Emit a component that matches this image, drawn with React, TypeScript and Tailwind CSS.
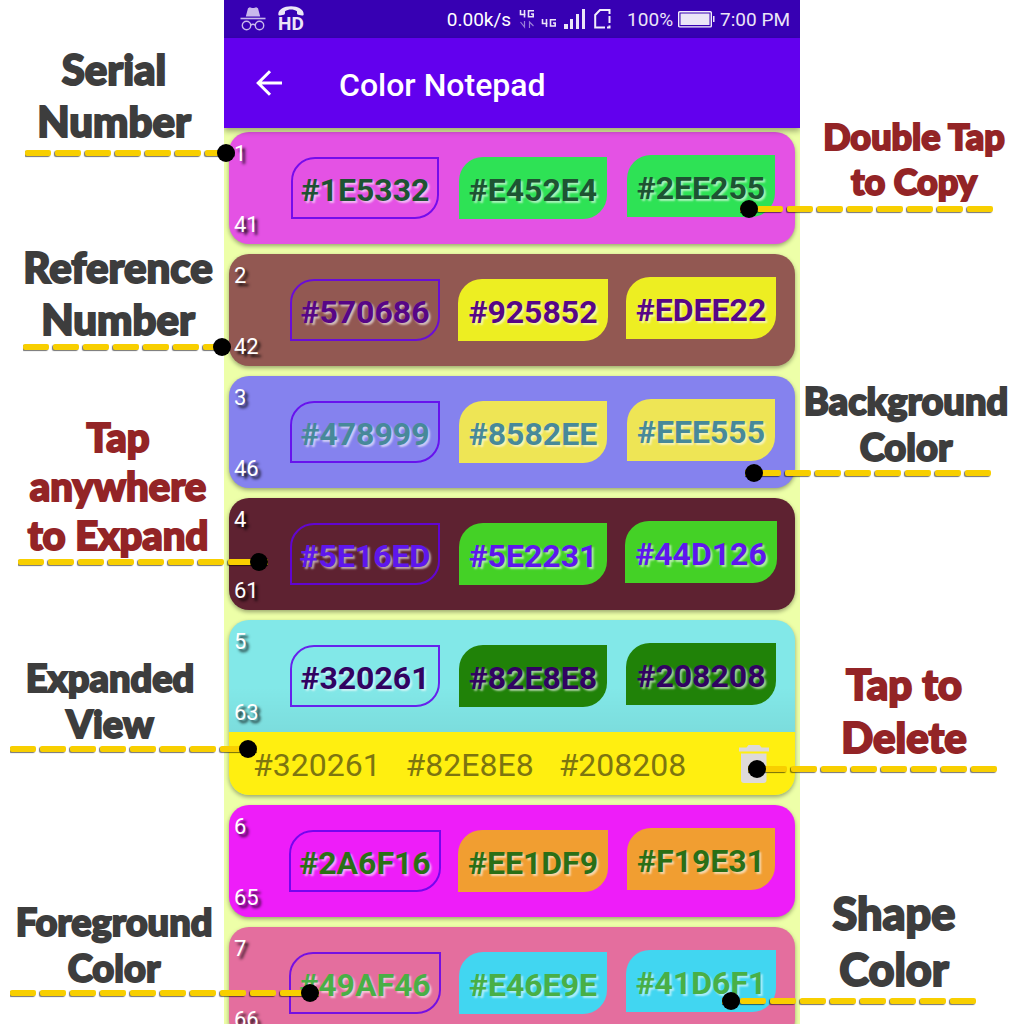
import React from "react";

type Palette = {
  serial: number;
  reference: number;
  background: string;
  shape: string;
  foreground: string;
  colors: [string, string, string];
  expanded?: boolean;
};

const palettes: Palette[] = [
  { serial: 1, reference: 41, background: "bg-[#e452e4]", shape: "bg-[#2ee255]", foreground: "text-[#1e5332]", colors: ["#1E5332", "#E452E4", "#2EE255"] },
  { serial: 2, reference: 42, background: "bg-[#925852]", shape: "bg-[#edee22]", foreground: "text-[#570686]", colors: ["#570686", "#925852", "#EDEE22"] },
  { serial: 3, reference: 46, background: "bg-[#8582ee]", shape: "bg-[#eee555]", foreground: "text-[#478999]", colors: ["#478999", "#8582EE", "#EEE555"] },
  { serial: 4, reference: 61, background: "bg-[#5e2231]", shape: "bg-[#44d126]", foreground: "text-[#5e16ed]", colors: ["#5E16ED", "#5E2231", "#44D126"] },
  { serial: 5, reference: 63, background: "bg-[#82e8e8]", shape: "bg-[#208208]", foreground: "text-[#320261]", colors: ["#320261", "#82E8E8", "#208208"], expanded: true },
  { serial: 6, reference: 65, background: "bg-[#ee1df9]", shape: "bg-[#f19e31]", foreground: "text-[#2a6f16]", colors: ["#2A6F16", "#EE1DF9", "#F19E31"] },
  { serial: 7, reference: 66, background: "bg-[#e46e9e]", shape: "bg-[#41d6f1]", foreground: "text-[#49af46]", colors: ["#49AF46", "#E46E9E", "#41D6F1"] },
];

function IncognitoIcon() {
  return (
    <svg viewBox="0 0 26 26" className="size-[26px]" fill="none" stroke="#c9b8ec" aria-hidden="true">
      <path d="M8 2.2l1.8-1 2.2.8h2l2.2-.8 1.8 1 2.2 8.2H5.800z" fill="#c9b8ec" stroke="none" />
      <path d="M.5 12.500h25" strokeWidth="1.600" />
      <circle cx="6.500" cy="19.500" r="4.200" strokeWidth="1.400" />
      <circle cx="19.500" cy="19.500" r="4.200" strokeWidth="1.400" />
      <path d="M10.700 19.200q2.300-1.800 4.600 0" strokeWidth="1.400" />
    </svg>
  );
}

function HdCallIcon() {
  return (
    <span className="flex flex-col items-center text-[#ebe5f7]">
      <svg viewBox="0 0 26 10" className="h-[10px] w-[26px]" aria-hidden="true">
        <path d="M.3 8.500C0 3.500 6 .3 13 .3S26 3.500 25.700 8.500c-.2 1-.8 1.200-1.700 1l-3.800-.8c-.9-.2-1.200-.8-1.200-1.600V5.300C15.500 3 10.500 3 7 5.300v1.800c0 .8-.3 1.400-1.200 1.600L2 9.500c-.9.2-1.500 0-1.700-1z" fill="currentColor" />
      </svg>
      <span className="text-[19px] leading-[16px] font-bold">HD</span>
    </span>
  );
}

function DataIcon() {
  return (
    <svg viewBox="0 0 16 20" className="h-5 w-4" fill="none" strokeWidth="1.600" aria-hidden="true">
      <path d="M1.500 1v4.500h5M5.500 1v7.500M15 1.800H9.500v6H14.200V5H12" stroke="#ebe5f7" />
      <path d="M1.500 13l4 5v-6M14.500 17l-4-4v6" stroke="#9a7fd8" strokeWidth="1.200" />
    </svg>
  );
}

function SmallFourG() {
  return (
    <svg viewBox="0 0 16 10" className="h-[10px] w-4" fill="none" stroke="#ebe5f7" strokeWidth="1.600" aria-hidden="true">
      <path d="M1.500 1v4.500h5M5.500 1v8M15 1.800H9.500v6.200H14.200V5H12" />
    </svg>
  );
}

function SignalIcon() {
  return (
    <svg viewBox="0 0 22 20" className="h-5 w-[22px]" fill="#ebe5f7" aria-hidden="true">
      <rect x="0" y="15" width="4" height="5" />
      <rect x="6" y="10" width="3" height="10" />
      <rect x="12" y="5" width="3" height="15" />
      <rect x="18" y="0" width="3" height="20" />
    </svg>
  );
}

function SimIcon() {
  return (
    <svg viewBox="0 0 17 20" className="h-5 w-[17px]" fill="none" stroke="#f3effb" strokeWidth="2" aria-hidden="true">
      <path d="M15.500 5V1H6L1.200 6v12.500H11" />
      <path d="M15.500 7v7M15.500 16.500v3M13 18.500h3.500" />
    </svg>
  );
}

function BatteryIcon() {
  return (
    <svg viewBox="0 0 37 17" className="h-[17px] w-[37px]" aria-hidden="true">
      <rect x=".7" y=".7" width="32.600" height="15.200" rx="1" fill="none" stroke="#f3effb" strokeWidth="1.400" />
      <rect x="2.500" y="2.500" width="29" height="11.500" fill="#ebe5f7" />
      <rect x="35" y="5" width="1.500" height="6" fill="#ebe5f7" />
    </svg>
  );
}

function StatusBar() {
  return (
    <div className="flex h-[38px] items-center bg-[#3700b3] pr-[10px] pl-4 text-[19px] text-[#ebe5f7]">
      <IncognitoIcon />
      <span className="ml-3">
        <HdCallIcon />
      </span>
      <span className="ml-auto pt-0.5 text-white">0.00k/s</span>
      <span className="ml-2">
        <DataIcon />
      </span>
      <span className="mt-2 ml-1.5">
        <SmallFourG />
      </span>
      <span className="ml-[7px]">
        <SignalIcon />
      </span>
      <span className="ml-2">
        <SimIcon />
      </span>
      <span className="ml-4 pt-0.5">100%</span>
      <span className="ml-[5px]">
        <BatteryIcon />
      </span>
      <span className="ml-[5px] pt-0.5">7:00 PM</span>
    </div>
  );
}

function AppBar() {
  return (
    <header className="relative z-10 flex h-[90px] items-center bg-[#6200ee] pl-8 text-white shadow-[0_3px_6px_rgba(0,0,0,0.35)]">
      <button type="button" aria-label="Back" className="size-[26px]">
        <svg viewBox="0 0 26 26" className="size-full" fill="none" stroke="currentColor" strokeWidth="3" aria-hidden="true">
          <path d="M26 13H2.500M14 1.200L2.200 13L14 24.800" />
        </svg>
      </button>
      <h1 className="ml-[57px] pt-1 text-[32px] font-medium">Color Notepad</h1>
    </header>
  );
}

const chipText = "[text-shadow:2px_2px_2px_rgba(255,255,255,0.6)]";

function Chip({ value, look, raised }: { value: string; look: string; raised?: boolean }) {
  return (
    <button
      type="button"
      className={`h-[62px] rounded-tl-3xl rounded-br-3xl pt-1 text-[32px] font-bold ${chipText} ${look} ${raised ? "-mt-1" : ""}`}
    >
      {value}
    </button>
  );
}

function PaletteCard({ item }: { item: Palette }) {
  const filled = `px-[10px] ${item.shape} ${item.foreground}`;
  return (
    <article className={`shrink-0 overflow-hidden rounded-[20px] shadow-[0_2px_4px_rgba(0,0,0,0.35)] ${item.background}`}>
      <div className={`flex h-[112px] ${item.expanded ? "bg-linear-to-b from-transparent from-60% to-black/5" : ""}`}>
        <div className="flex w-[52px] flex-col justify-between pt-2 pb-[5px] pl-[5px] text-[22px] leading-[28px] text-white [text-shadow:3px_3px_3px_rgba(0,0,0,0.85)]">
          <span>{item.serial}</span>
          <span>{item.reference}</span>
        </div>
        <div className="mr-[10px] grid flex-1 grid-cols-3 items-center justify-items-center">
          <Chip value={item.colors[0]} look={`border-2 border-[#6200ee]/85 px-2 ${item.foreground}`} />
          <Chip value={item.colors[1]} look={filled} />
          <Chip value={item.colors[2]} look={filled} raised />
        </div>
      </div>
      {item.expanded && (
        <div className="flex h-[63px] items-center gap-[25px] bg-[#ffef10] pr-[26px] pl-6 text-[32px] text-[#7d7510]">
          {item.colors.map((color) => (
            <span key={color} className="pt-0.5">
              {color}
            </span>
          ))}
          <button type="button" aria-label="Delete palette" className="ml-auto">
            <svg viewBox="0 0 30 38" className="h-[38px] w-[30px]" fill="#dedad8" aria-hidden="true">
              <path d="M0 2.500h7.500L9.500 0h11l2 2.500H30v4H0z" />
              <path d="M2 8.500h25.500V35a3 3 0 0 1-3 3H5a3 3 0 0 1-3-3z" />
            </svg>
          </button>
        </div>
      )}
    </article>
  );
}

type CalloutProps = {
  lines: string[];
  tone: string;
  className: string;
  text: string;
  connector: string;
  side: "left" | "right";
};

function Connector({ side, className }: { side: "left" | "right"; className: string }) {
  const flip = side === "right";
  return (
    <div className={`relative flex h-[18px] items-center ${className}`} aria-hidden="true">
      <div className={`flex w-full gap-1 overflow-x-clip ${flip ? "flex-row-reverse pl-2" : "pr-2"}`}>
        {Array.from({ length: 11 }, (_, i) => (
          <i key={i} className="h-[6px] w-[26px] shrink-0 rounded-[2px] bg-[#f8cf00] shadow-[-1px_1px_1px_rgba(0,0,0,0.55)]" />
        ))}
      </div>
      <b className={`absolute size-[18px] rounded-full bg-black ${flip ? "left-0" : "right-0"}`} />
    </div>
  );
}

function Callout({ lines, tone, className, text, connector, side }: CalloutProps) {
  return (
    <section className={`flex flex-col ${side === "right" ? "items-end" : "items-start"} ${className}`}>
      <h2 className={`w-full text-center font-black whitespace-nowrap ${tone} ${text}`}>
        {lines.map((line) => (
          <span key={line} className="-mx-4 block">
            {line}
          </span>
        ))}
      </h2>
      <Connector side={side} className={connector} />
    </section>
  );
}

const gray = "text-[#3d3d3d] [-webkit-text-stroke:2px_#3d3d3d]";
const red = "text-[#932426] [-webkit-text-stroke:2px_#932426]";

export default function App() {
  return (
    <main className="grid h-screen grid-cols-[224px_1fr_224px] overflow-hidden bg-white font-[Roboto,sans-serif]">
      <aside className="relative z-20 font-[Lato,sans-serif]">
        <Callout side="left" lines={["Serial", "Number"]} tone={gray} className="pt-[43px]" text="pl-1 text-[42px] leading-[52px]" connector="-mt-[3px] ml-[25px] w-[210px]" />
        <Callout side="left" lines={["Reference", "Number"]} tone={gray} className="pt-[79px]" text="pl-3 text-[42px] leading-[52px]" connector="-mt-[7px] ml-[23px] w-[208px]" />
        <Callout side="left" lines={["Tap", "anywhere", "to Expand"]} tone={red} className="pt-[57px]" text="pl-3 text-[40px] leading-[49px]" connector="-mt-[7px] ml-[18px] w-[250px]" />
        <Callout side="left" lines={["Expanded", "View"]} tone={gray} className="pt-[83px]" text="pr-1 text-[38px] leading-[46px]" connector="-mt-1.5 ml-[10px] w-[247px]" />
        <Callout side="left" lines={["Foreground", "Color"]} tone={gray} className="pt-[140px]" text="pl-1 text-[38px] leading-[46px]" connector="-mt-1.5 ml-[10px] w-[309px]" />
      </aside>

      <div className="flex min-w-0 flex-col overflow-hidden">
        <StatusBar />
        <AppBar />
        <div className="flex min-h-0 flex-1 flex-col gap-[10px] overflow-hidden bg-[#edffa8] px-[5px] pt-1">
          {palettes.map((item) => (
            <PaletteCard key={item.serial} item={item} />
          ))}
        </div>
      </div>

      <aside className="relative z-20 font-[Lato,sans-serif]">
        <Callout side="right" lines={["Double Tap", "to Copy"]} tone={red} className="pt-[114px]" text="pl-1 text-[36px] leading-[45px]" connector="-mt-1 mr-[31px] w-[253px]" />
        <Callout side="right" lines={["Background", "Color"]} tone={gray} className="pt-[159px]" text="pr-3 text-[38px] leading-[46px]" connector="-mt-[5px] mr-[33px] w-[246px]" />
        <Callout side="right" lines={["Tap to", "Delete"]} tone={red} className="pt-[176px]" text="pr-4 text-[42px] leading-[53px]" connector="-mt-1 mr-[27px] w-[249px]" />
        <Callout side="right" lines={["Shape", "Color"]} tone={gray} className="pt-[107px]" text="pr-9 text-[45px] leading-[56px]" connector="-mt-[5px] mr-12 w-[254px]" />
      </aside>
    </main>
  );
}
